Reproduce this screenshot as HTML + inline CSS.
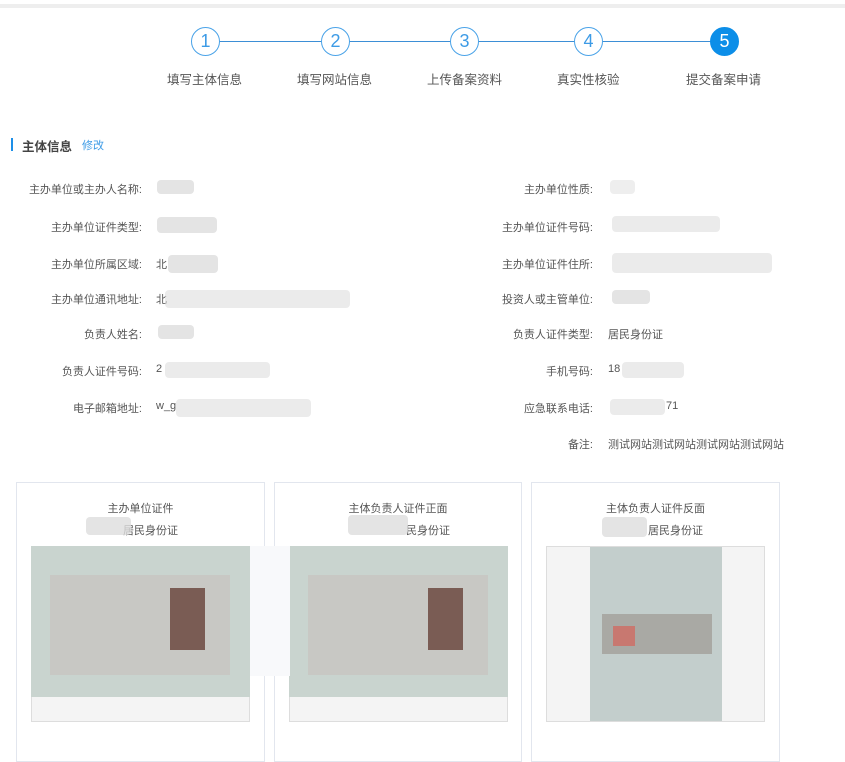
<!DOCTYPE html>
<html><head><meta charset="utf-8"><style>
*{margin:0;padding:0;box-sizing:border-box}
body{width:845px;height:752px;background:#fff;position:relative;overflow:hidden;font-family:"Liberation Sans","Noto Sans CJK SC",sans-serif;font-size:11px;color:#555}
.a{position:absolute;white-space:nowrap}
.c{position:absolute;width:29px;height:29px;border-radius:50%;border:1.5px solid #4aa3e8;background:#fff;color:#3d9be6;font-size:18px;text-align:center;line-height:26px}
.lbl{position:absolute;width:150px;text-align:right}
.blur{position:absolute;background:#ddd;opacity:.8;border-radius:4px}
.card{position:absolute;top:482px;height:280px;border:1px solid #e2e6ee;background:#fff}
.card .t{position:absolute;width:100%;text-align:center;font-size:11px}
</style></head><body>
<div class="a" style="left:0;top:4px;width:845px;height:4px;background:#eee"></div>
<div class="a" style="left:205px;top:41px;width:519px;height:1px;background:#3d8fd6"></div>
<div class="c" style="left:191px;top:27px">1</div>
<div class="c" style="left:321px;top:27px">2</div>
<div class="c" style="left:450px;top:27px">3</div>
<div class="c" style="left:574px;top:27px">4</div>
<div class="c" style="left:710px;top:27px;background:#0c8ee8;border-color:#0c8ee8;color:#fff">5</div>
<div class="a" style="left:167px;top:69px;font-size:12.5px">填写主体信息</div>
<div class="a" style="left:297px;top:69px;font-size:12.5px">填写网站信息</div>
<div class="a" style="left:427px;top:69px;font-size:12.5px">上传备案资料</div>
<div class="a" style="left:557px;top:69px;font-size:12.5px">真实性核验</div>
<div class="a" style="left:686px;top:69px;font-size:12.5px">提交备案申请</div>

<div class="a" style="left:11px;top:138px;width:2px;height:13px;background:#1d8fe8"></div>
<div class="a" style="left:22px;top:136px;font-size:12.5px;font-weight:bold;color:#444">主体信息</div>
<div class="a" style="left:82px;top:137px;color:#3d9be6">修改</div>

<div class="lbl" style="left:-8px;top:181px">主办单位或主办人名称:</div>
<div class="lbl" style="left:-8px;top:219px">主办单位证件类型:</div>
<div class="lbl" style="left:-8px;top:256px">主办单位所属区域:</div>
<div class="lbl" style="left:-8px;top:291px">主办单位通讯地址:</div>
<div class="lbl" style="left:-8px;top:326px">负责人姓名:</div>
<div class="lbl" style="left:-8px;top:363px">负责人证件号码:</div>
<div class="lbl" style="left:-8px;top:400px">电子邮箱地址:</div>
<div class="a" style="left:156px;top:256px">北</div>
<div class="a" style="left:156px;top:291px">北</div>
<div class="a" style="left:156px;top:363px">2</div>
<div class="a" style="left:156px;top:400px">w_g</div>
<div class="blur" style="left:157px;top:180px;width:37px;height:14px"></div>
<div class="blur" style="left:157px;top:217px;width:60px;height:16px"></div>
<div class="blur" style="left:168px;top:255px;width:50px;height:18px"></div>
<div class="blur" style="left:165px;top:290px;width:185px;height:18px;opacity:.6"></div>
<div class="blur" style="left:158px;top:325px;width:36px;height:14px"></div>
<div class="blur" style="left:165px;top:362px;width:105px;height:16px;opacity:.6"></div>
<div class="blur" style="left:176px;top:399px;width:135px;height:18px;opacity:.6"></div>

<div class="lbl" style="left:443px;top:181px">主办单位性质:</div>
<div class="lbl" style="left:443px;top:219px">主办单位证件号码:</div>
<div class="lbl" style="left:443px;top:256px">主办单位证件住所:</div>
<div class="lbl" style="left:443px;top:291px">投资人或主管单位:</div>
<div class="lbl" style="left:443px;top:326px">负责人证件类型:</div>
<div class="lbl" style="left:443px;top:363px">手机号码:</div>
<div class="lbl" style="left:443px;top:400px">应急联系电话:</div>
<div class="lbl" style="left:443px;top:436px">备注:</div>
<div class="a" style="left:608px;top:326px">居民身份证</div>
<div class="a" style="left:608px;top:363px">18</div>
<div class="a" style="left:666px;top:400px">71</div>
<div class="a" style="left:608px;top:436px">测试网站测试网站测试网站测试网站</div>
<div class="blur" style="left:610px;top:180px;width:25px;height:14px;opacity:.5"></div>
<div class="blur" style="left:612px;top:216px;width:108px;height:16px;opacity:.6"></div>
<div class="blur" style="left:612px;top:253px;width:160px;height:20px;opacity:.6"></div>
<div class="blur" style="left:612px;top:290px;width:38px;height:14px"></div>
<div class="blur" style="left:622px;top:362px;width:62px;height:16px;opacity:.6"></div>
<div class="blur" style="left:610px;top:399px;width:55px;height:16px;opacity:.6"></div>

<div class="card" style="left:16px;width:249px">
 <div class="t" style="top:17px">主办单位证件</div>
 <div class="t" style="top:39px;padding-left:20px">居民身份证</div>
</div>
<div class="card" style="left:274px;width:248px">
 <div class="t" style="top:17px">主体负责人证件正面</div>
 <div class="t" style="top:39px;padding-left:60px">民身份证</div>
</div>
<div class="card" style="left:531px;width:249px">
 <div class="t" style="top:17px">主体负责人证件反面</div>
 <div class="t" style="top:39px;padding-left:40px">居民身份证</div>
</div>
<div class="blur" style="left:86px;top:517px;width:45px;height:18px"></div>
<div class="blur" style="left:348px;top:515px;width:60px;height:20px"></div>
<div class="blur" style="left:602px;top:517px;width:45px;height:20px"></div>

<div class="a" style="left:31px;top:546px;width:219px;height:176px;background:#f4f4f4;border:1px solid #ddd"></div>
<div class="a" style="left:31px;top:546px;width:219px;height:151px;background:#c9d4cf"></div>
<div class="a" style="left:50px;top:575px;width:180px;height:100px;background:#c8c8c4"></div>
<div class="a" style="left:170px;top:588px;width:35px;height:62px;background:#7a5c54"></div>
<div class="a" style="left:289px;top:546px;width:219px;height:176px;background:#f4f4f4;border:1px solid #ddd"></div>
<div class="a" style="left:289px;top:546px;width:219px;height:151px;background:#c9d4cf"></div>
<div class="a" style="left:308px;top:575px;width:180px;height:100px;background:#c8c8c4"></div>
<div class="a" style="left:428px;top:588px;width:35px;height:62px;background:#7a5c54"></div>
<div class="a" style="left:250px;top:546px;width:40px;height:130px;background:#f8f9fb"></div>
<div class="a" style="left:546px;top:546px;width:219px;height:176px;background:#f4f4f4;border:1px solid #ddd"></div>
<div class="a" style="left:590px;top:547px;width:132px;height:174px;background:#c3cecc"></div>
<div class="a" style="left:602px;top:614px;width:110px;height:40px;background:#a9a9a4"></div>
<div class="a" style="left:613px;top:626px;width:22px;height:20px;background:#c87870"></div>
</body></html>
